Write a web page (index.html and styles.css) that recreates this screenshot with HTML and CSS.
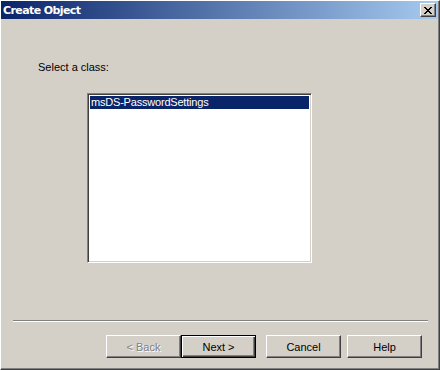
FILE: index.html
```html
<!DOCTYPE html>
<html lang="en">
<head>
    <meta charset="UTF-8">
    <title>Create Object</title>
    <link rel="stylesheet" href="styles.css">
</head>
<body>
    <div class="window">
        <div class="titlebar">
            <span class="title">Create Object</span>
            <button class="close" aria-label="Close">
                <svg width="8" height="7" viewBox="0 0 8 7">
                    <path d="M0 0h2v1h1v1h2v-1h1v-1h2v1h-1v1h-1v1h-1v1h1v1h1v1h1v1h-2v-1h-1v-1h-2v1h-1v1h-2v-1h1v-1h1v-1h1v-1h-1v-1h-1v-1h-1z" fill="#000"/>
                </svg>
            </button>
        </div>
        <div class="content">
            <p class="label">Select a class:</p>
            <div class="listbox">
                <div class="item selected">msDS-PasswordSettings</div>
            </div>
        </div>
        <div class="separator"></div>
        <div class="buttons">
            <button class="btn disabled">&lt; Back</button>
            <button class="btn default">Next &gt;</button>
            <button class="btn gap">Cancel</button>
            <button class="btn help">Help</button>
        </div>
    </div>
</body>
</html>
```

FILE: styles.css
```css
* {
    box-sizing: border-box;
}

body {
    margin: 0;
    font-family: "Liberation Sans", Arial, sans-serif;
    font-size: 11px;
    color: #000;
}

.window {
    width: 440px;
    height: 370px;
    background-color: #d4d0c8;
    border-top: 1px solid #ffffff;
    border-left: 1px solid #ffffff;
    border-right: 1px solid #404040;
    border-bottom: 1px solid #404040;
    box-shadow: inset -1px -1px 0 #808080;
    display: flex;
    flex-direction: column;
}

.titlebar {
    height: 18px;
    margin-right: 1px;
    padding: 0 2px 0 2px;
    display: flex;
    align-items: center;
    justify-content: space-between;
    background: linear-gradient(to right, #0a246a, #a6caf0);
}

.title {
    color: #fff;
    font-family: "DejaVu Sans", Verdana, sans-serif;
    font-weight: bold;
    font-size: 11px;
    letter-spacing: -0.6px;
}

.close {
    width: 16px;
    height: 14px;
    padding: 0;
    margin: 0;
    background-color: #d4d0c8;
    border: 1px solid;
    border-color: #ffffff #404040 #404040 #ffffff;
    box-shadow: inset -1px -1px 0 #808080;
    display: flex;
    align-items: center;
    justify-content: center;
}

.content {
    padding: 42px 0 0 37px;
    flex: 1;
}

.label {
    margin: 0;
    line-height: 13px;
}

.listbox {
    margin: 19px 0 0 49px;
    width: 225px;
    height: 170px;
    background-color: #fff;
    border: 1px solid;
    border-color: #808080 #ffffff #ffffff #808080;
    box-shadow: inset 1px 1px 0 #404040, inset -1px -1px 0 #d4d0c8;
    padding: 2px;
}

.item {
    height: 13px;
    line-height: 13px;
    padding-left: 1px;
    white-space: nowrap;
    letter-spacing: -0.2px;
}

.selected {
    background-color: #0a246a;
    color: #fff;
}

.separator {
    height: 2px;
    margin: 0 11px 0 12px;
    border-top: 1px solid #808080;
    border-bottom: 1px solid #ffffff;
}

.buttons {
    display: flex;
    justify-content: flex-end;
    padding: 13px 17px 11px 0;
}

.btn {
    width: 75px;
    height: 23px;
    margin: 0;
    padding: 0;
    font-family: "Liberation Sans", Arial, sans-serif;
    font-size: 11px;
    color: #000;
    background-color: #d4d0c8;
    border: 1px solid;
    border-color: #ffffff #404040 #404040 #ffffff;
    box-shadow: inset -1px -1px 0 #808080;
}

.gap {
    margin-left: 10px;
}

.help {
    margin-left: 6px;
}

.default {
    border: 1px solid #000;
    box-shadow: inset 1px 1px 0 #ffffff, inset -1px -1px 0 #404040, inset -2px -2px 0 #808080;
}

.disabled {
    color: #808080;
    text-shadow: 1px 1px 0 #ffffff;
}
```
